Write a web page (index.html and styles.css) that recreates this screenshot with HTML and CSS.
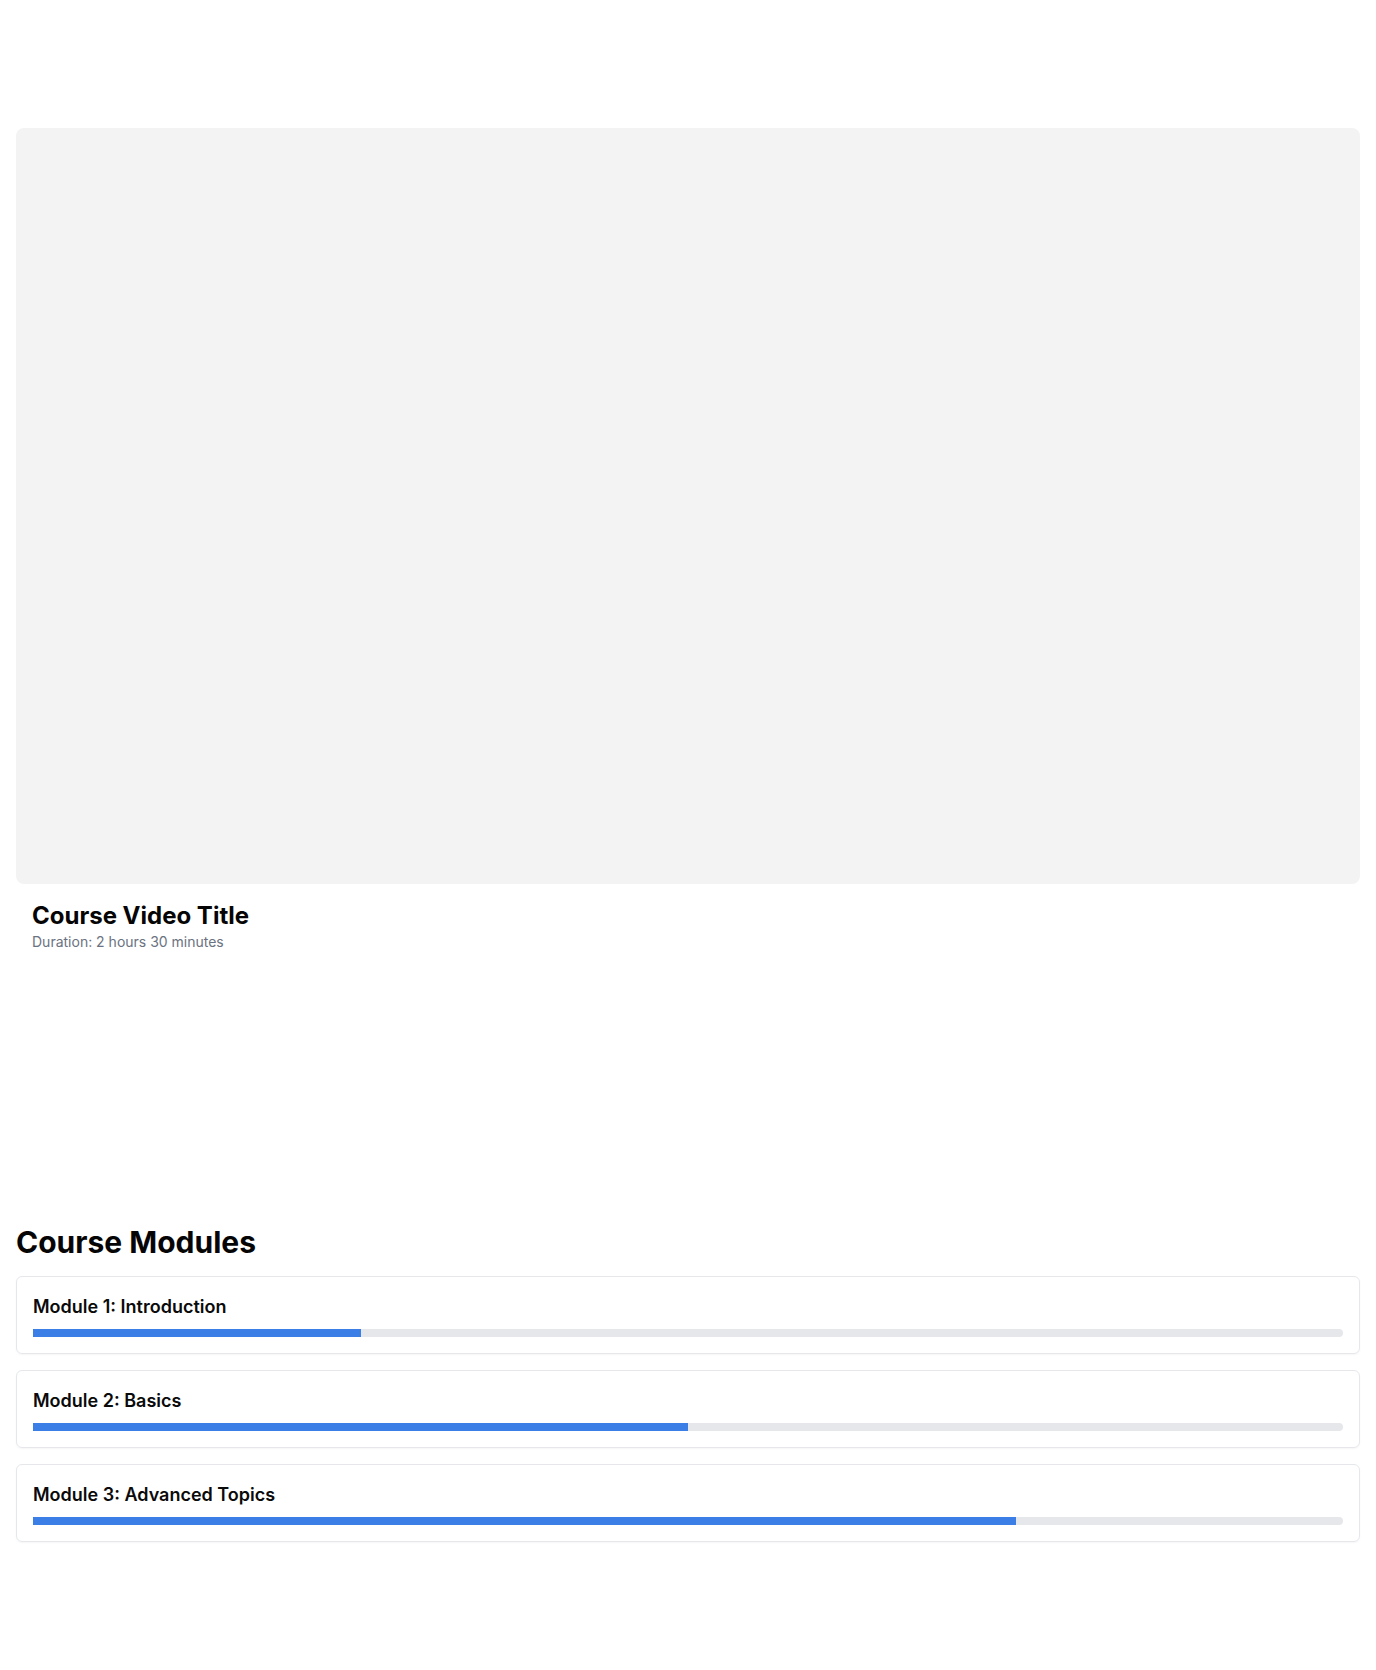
FILE: index.html
```html
<!DOCTYPE html>
<html lang="en">
<head>
<meta charset="utf-8">
<title>Course</title>
<link rel="stylesheet" href="styles.css">
</head>
<body>
<main class="page">
  <section class="player">
    <div class="video"></div>
    <div class="video-info">
      <h1 class="video-title">Course Video Title</h1>
      <p class="video-duration">Duration: 2 hours 30 minutes</p>
    </div>
  </section>
  <section class="modules">
    <h2 class="modules-title">Course Modules</h2>
    <div class="module-list">
      <div class="module">
        <h3 class="module-name">Module 1: Introduction</h3>
        <div class="track"><div class="fill" style="width:25%"></div></div>
      </div>
      <div class="module">
        <h3 class="module-name">Module 2: Basics</h3>
        <div class="track"><div class="fill" style="width:50%"></div></div>
      </div>
      <div class="module">
        <h3 class="module-name">Module 3: Advanced Topics</h3>
        <div class="track"><div class="fill" style="width:75%"></div></div>
      </div>
    </div>
  </section>
</main>
</body>
</html>
```
FILE: styles.css
```css
* { box-sizing: border-box; }
html, body { margin: 0; padding: 0; background: #ffffff; }
body {
  font-family: Inter, "Noto Sans", "Liberation Sans", sans-serif;
  color: #0a0a0a;
}
.page {
  padding: 128px 16px 64px;
}
.player { display: flex; flex-direction: column; }
.video {
  width: 100%;
  aspect-ratio: 16 / 9;
  background: #f3f3f3;
  border-radius: 8px;
}
.video-info { padding: 16px; }
.video-title {
  margin: 0;
  font-size: 24px;
  line-height: 32px;
  font-weight: 700;
  color: #050505;
}
.video-duration {
  margin: 0;
  font-size: 14px;
  line-height: 20px;
  color: #6b7280;
}
.modules { margin-top: 256px; }
.modules-title {
  margin: 0 0 16px;
  font-size: 30px;
  line-height: 36px;
  font-weight: 700;
  color: #050505;
}
.module-list { display: flex; flex-direction: column; gap: 16px; }
.module {
  border: 1px solid #e5e7eb;
  border-radius: 6px;
  padding: 16px;
  box-shadow: 0 1px 2px rgba(0,0,0,0.04);
}
.module-name {
  margin: 0 0 8px;
  font-size: 18px;
  line-height: 28px;
  font-weight: 600;
  color: #0a0a0a;
}
.track {
  height: 8px;
  background: #e5e7eb;
  border-radius: 9999px;
}
.fill {
  height: 100%;
  background: #3b7fe6;
}
```
